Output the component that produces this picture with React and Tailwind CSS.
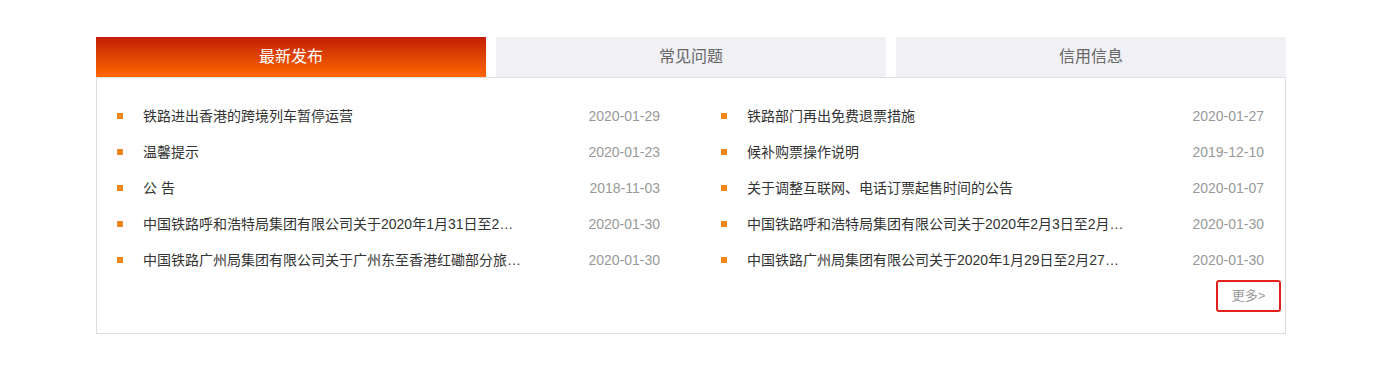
import React from "react";

const left = [
  ["铁路进出香港的跨境列车暂停运营", "2020-01-29"],
  ["温馨提示", "2020-01-23"],
  ["公 告", "2018-11-03"],
  ["中国铁路呼和浩特局集团有限公司关于2020年1月31日至2月...", "2020-01-30"],
  ["中国铁路广州局集团有限公司关于广州东至香港红磡部分旅客列车停运的公告", "2020-01-30"],
];
const right = [
  ["铁路部门再出免费退票措施", "2020-01-27"],
  ["候补购票操作说明", "2019-12-10"],
  ["关于调整互联网、电话订票起售时间的公告", "2020-01-07"],
  ["中国铁路呼和浩特局集团有限公司关于2020年2月3日至2月9日", "2020-01-30"],
  ["中国铁路广州局集团有限公司关于2020年1月29日至2月27日部分旅客列车停运的公告", "2020-01-30"],
];

function Column({ items }) {
  return (
    <div className="w-[543px] flex flex-col">
      {items.map(([t, d], i) => (
        <div key={i} className="h-9 flex items-center">
          <span className="w-[6px] h-[6px] bg-[#f08519] shrink-0"></span>
          <span className="ml-[20px] w-[380px] truncate text-[14px] text-[#333]">{t}</span>
          <span className="ml-auto text-[14px] text-[#999]">{d}</span>
        </div>
      ))}
    </div>
  );
}

export default function App() {
  return (
    <div
      className="bg-white w-[1394px] h-[374px] pt-[37px] pl-[96px]"
      style={{ fontFamily: '"Liberation Sans", Arial, "Noto Sans CJK SC", sans-serif' }}
    >
      <div className="w-[1190px]">
        <div className="flex gap-[10px]">
          <div className="w-[390px] h-10 flex items-center justify-center text-[16px] text-white bg-gradient-to-b from-[#c21a04] to-[#ff6600]">
            最新发布
          </div>
          <div className="w-[390px] h-10 flex items-center justify-center text-[16px] text-[#666] bg-[#f0f0f5]">
            常见问题
          </div>
          <div className="w-[390px] h-10 flex items-center justify-center text-[16px] text-[#666] bg-[#f0f0f5]">
            信用信息
          </div>
        </div>
        <div className="border border-[#dedede] pt-[20px] pl-[20px] pr-[21px] pb-[21px]">
          <div className="flex gap-[61px]">
            <Column items={left} />
            <Column items={right} />
          </div>
          <div className="flex justify-end mt-[2px] mr-[-17px]">
            <div className="w-[65px] h-[32px] border-2 border-[#e3211c] rounded-[3px] flex items-center justify-center text-[13px] text-[#999]">
              更多&gt;
            </div>
          </div>
        </div>
      </div>
    </div>
  );
}
